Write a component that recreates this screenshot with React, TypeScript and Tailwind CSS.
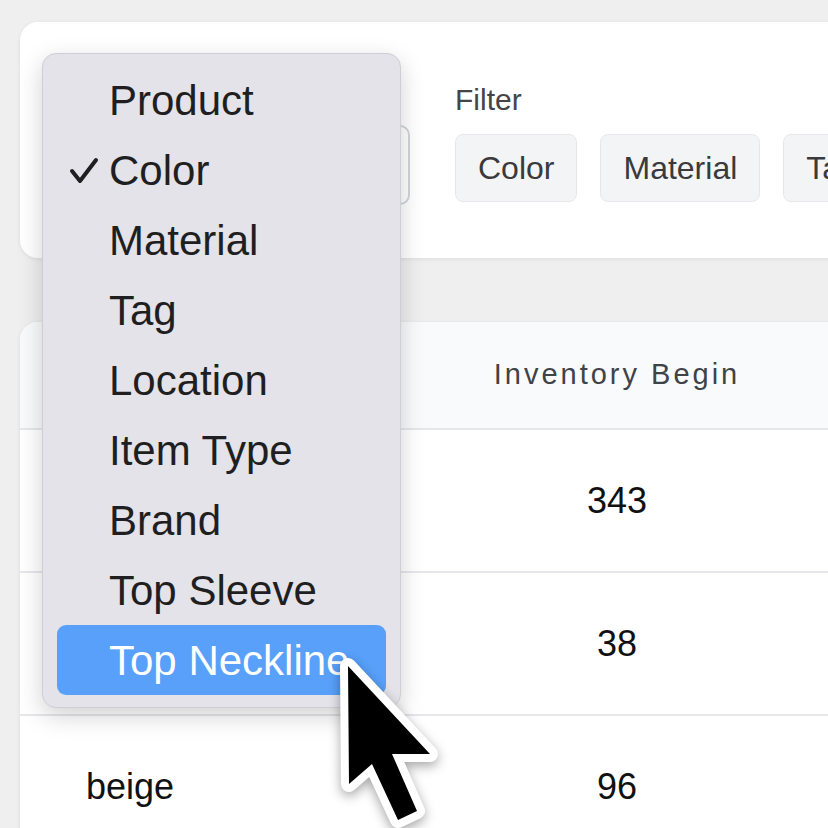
import React from 'react';

const menuItems = [
  'Product',
  'Color',
  'Material',
  'Tag',
  'Location',
  'Item Type',
  'Brand',
  'Top Sleeve',
  'Top Neckline',
];

const rows = [
  { name: '', begin: 343 },
  { name: '', begin: 38 },
  { name: 'beige', begin: 96 },
];

function Cursor() {
  return (
    <svg
      className="absolute left-[320px] top-[638px] drop-shadow-[0_4px_6px_rgba(0,0,0,0.35)]"
      width="140"
      height="200"
      viewBox="0 0 140 200"
    >
      <path
        d="M28 28 L29 146 L52 126 L78 182 L97 173 L72 116 L110 116 Z"
        fill="#000"
        stroke="#fff"
        strokeWidth="16"
        strokeLinejoin="round"
        paintOrder="stroke"
      />
    </svg>
  );
}

export default function App() {
  return (
    <div className="relative w-[828px] h-[828px] overflow-hidden bg-[#efefef] font-['Liberation_Sans',Arial,sans-serif]">
      <div className="w-[900px] pl-[20px] pt-[22px] flex flex-col gap-[64px]">
        {/* filter card */}
        <div className="h-[236px] bg-white rounded-[18px] shadow-[0_1px_4px_rgba(0,0,0,0.08)] flex pl-[32px] pt-[60px] gap-[45px] overflow-hidden">
          <div className="shrink-0 flex flex-col w-[358px] pt-[43px]">
            {/* group-by select, covered by the open menu */}
            <div className="h-[80px] border-2 border-[#d1d5db] rounded-[10px]" />
          </div>
          <div className="shrink-0 flex flex-col gap-[16px]">
            <span className="text-[30px] leading-[36px] text-[#454545]">Filter</span>
            <div className="flex gap-[23px]">
              {['Color', 'Material', 'Tag'].map((c) => (
                <div
                  key={c}
                  className="shrink-0 h-[68px] px-[22px] flex items-center bg-[#f3f4f6] border border-[#e5e7eb] rounded-[8px] text-[32px] text-[#3a3a3c]"
                >
                  {c}
                </div>
              ))}
            </div>
          </div>
        </div>

        {/* table card */}
        <div className="bg-white rounded-[18px] shadow-[0_1px_4px_rgba(0,0,0,0.08)] overflow-hidden">
          <div className="h-[108px] bg-[#f9fafb] border-b-2 border-[#e5e7eb] grid grid-cols-[396px_402px_1fr] items-center">
            <div />
            <div className="text-center text-[29px] tracking-[3px] text-[#3f4348]">Inventory Begin</div>
            <div />
          </div>
          {rows.map((r) => (
            <div
              key={r.begin}
              className="h-[143px] border-b-2 border-[#e5e7eb] grid grid-cols-[396px_402px_1fr] items-center"
            >
              <div className="pl-[66px] text-[36px] text-[#111]">{r.name}</div>
              <div className="text-center text-[36px] text-[#111]">{r.begin}</div>
              <div />
            </div>
          ))}
        </div>
      </div>

      {/* dropdown menu */}
      <div className="absolute left-[42px] top-[53px] w-[359px] bg-[#e4e3e9] border border-[#cfced4] rounded-[14px] shadow-[0_8px_24px_rgba(0,0,0,0.18)] pt-[11px] pb-[12px] px-[14px] flex flex-col">
        {menuItems.map((item) => {
          const active = item === 'Top Neckline';
          return (
            <div
              key={item}
              className={`relative h-[70px] rounded-[9px] flex items-center pl-[52px] text-[42px] ${
                active ? 'bg-[#58a0fa] text-white' : 'text-[#1f1f22]'
              }`}
            >
              {item === 'Color' && (
                <svg
                  className="absolute left-[12px] top-[22px]"
                  width="30"
                  height="28"
                  viewBox="0 0 30 28"
                >
                  <path
                    d="M3 14 L11 24 L27 3"
                    fill="none"
                    stroke="#1f1f22"
                    strokeWidth="4"
                    strokeLinecap="round"
                    strokeLinejoin="round"
                  />
                </svg>
              )}
              {item}
            </div>
          );
        })}
      </div>

      <Cursor />
    </div>
  );
}
